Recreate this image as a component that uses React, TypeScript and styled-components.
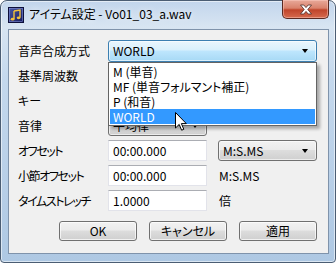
import React from 'react';
import styled, { createGlobalStyle } from 'styled-components';

const GlobalStyle = createGlobalStyle`
  html, body {
    margin: 0;
    padding: 0;
    background: #ffffff;
  }
  body {
    font-family: 'Noto Sans CJK JP', 'Noto Sans', sans-serif;
    font-size: 12px;
    font-feature-settings: 'palt';
    color: #000;
  }
`;

const Window = styled.div`
  position: relative;
  box-sizing: border-box;
  width: 336px;
  height: 263px;
  display: flex;
  flex-direction: column;
  padding: 0 6px 8px 7px;
  border: 1px solid #4b5d73;
  border-radius: 7px 7px 4px 4px;
  background: linear-gradient(to bottom, #c2d5ec 0%, #d8e5f2 10%, #c4d8ed 30%, #aec8e3 100%);
  box-shadow: inset 0 0 0 1px rgba(255, 255, 255, 0.55);
`;

const TitleBar = styled.div`
  height: 28px;
  display: flex;
  align-items: flex-start;
  flex-shrink: 0;
`;

const TitleIcon = styled.svg`
  margin-top: 6px;
  width: 16px;
  height: 16px;
  flex-shrink: 0;
`;

const TitleText = styled.span`
  margin-left: 5px;
  margin-top: 5px;
  font-size: 12px;
  line-height: 16px;
  color: #000;
  text-shadow: 0 0 6px rgba(255, 255, 255, 0.9);
`;

const CloseButton = styled.div`
  margin-left: auto;
  margin-top: -1px;
  width: 47px;
  height: 19px;
  box-sizing: border-box;
  display: flex;
  align-items: center;
  justify-content: center;
  border: 1px solid #5a2a22;
  border-top: none;
  border-radius: 0 0 5px 5px;
  background: linear-gradient(to bottom, #e8a99a 0%, #d9826c 45%, #c0452b 55%, #d66a4e 100%);
  box-shadow: inset 0 0 0 1px rgba(255, 210, 200, 0.45);
`;

const Client = styled.div`
  flex: 1;
  box-sizing: border-box;
  border: 1px solid #7f93ab;
  background: #f0f0f0;
  padding: 10px 11px 0 9px;
  display: flex;
  flex-direction: column;
`;

const Form = styled.div`
  display: grid;
  grid-template-columns: 79px 99px 99px;
  grid-auto-rows: 21px;
  column-gap: 11px;
  row-gap: 4px;
`;

const Label = styled.div<{ $tight?: boolean }>`
  align-self: center;
  font-size: 12px;
  line-height: 14px;
  white-space: nowrap;
  letter-spacing: ${(p) => (p.$tight ? '-1.4px' : '0')};
`;

const Unit = styled.div`
  align-self: center;
  font-size: 12px;
  line-height: 14px;
  padding-left: 1px;
`;

const ComboBox = styled.div<{ $open?: boolean; $wide?: boolean }>`
  position: relative;
  grid-column: ${(p) => (p.$wide ? 'span 2' : 'auto')};
  box-sizing: border-box;
  height: ${(p) => (p.$open ? '22px' : '21px')};
  display: flex;
  align-items: center;
  padding: 0 8px 0 4px;
  border: 1px solid ${(p) => (p.$open ? '#3c7fb1' : '#707070')};
  border-radius: 3px;
  background: ${(p) =>
    p.$open
      ? 'linear-gradient(to bottom, #eaf6fd 0%, #d9f0fc 45%, #bee6fd 50%, #a7d9f5 100%)'
      : 'linear-gradient(to bottom, #f2f2f2 0%, #ebebeb 45%, #dddddd 50%, #cfcfcf 100%)'};
  box-shadow: inset 0 0 0 1px rgba(255, 255, 255, 0.6);
`;

const ComboText = styled.span`
  flex: 1;
  font-size: 12px;
  line-height: 14px;
  white-space: nowrap;
`;

const Arrow = styled.span`
  width: 0;
  height: 0;
  border-left: 3.5px solid transparent;
  border-right: 3.5px solid transparent;
  border-top: 4px solid #000;
`;

const TextBox = styled.div`
  box-sizing: border-box;
  height: 21px;
  display: flex;
  align-items: center;
  padding: 0 4px;
  background: #fff;
  border: 1px solid #e2e3ea;
  border-top-color: #abadb3;
  font-size: 12px;
  line-height: 14px;
`;

const DropList = styled.div`
  position: absolute;
  z-index: 2;
  left: -1px;
  right: -1px;
  top: 21px;
  box-sizing: border-box;
  padding: 1px 1px 0;
  height: 64px;
  background: #fff;
  border: 1px solid #646464;
  box-shadow: 3px 3px 3px rgba(0, 0, 0, 0.3);
`;

const DropItem = styled.div<{ $selected?: boolean }>`
  height: 15px;
  display: flex;
  align-items: center;
  padding-left: 3px;
  font-size: 12px;
  line-height: 14px;
  white-space: pre;
  color: ${(p) => (p.$selected ? '#fff' : '#000')};
  background: ${(p) => (p.$selected ? '#3399ff' : 'transparent')};
`;

const ButtonRow = styled.div`
  display: flex;
  justify-content: flex-end;
  gap: 12px;
  margin-top: 10px;
`;

const Button = styled.div`
  box-sizing: border-box;
  width: 78px;
  height: 20px;
  display: flex;
  align-items: center;
  justify-content: center;
  border: 1px solid #707070;
  border-radius: 3px;
  background: linear-gradient(to bottom, #f2f2f2 0%, #ebebeb 45%, #dddddd 50%, #cfcfcf 100%);
  box-shadow: inset 0 0 0 1px rgba(255, 255, 255, 0.7);
  font-size: 12px;
  line-height: 14px;
`;

const Cursor = styled.svg`
  position: absolute;
  z-index: 5;
  left: 174px;
  top: 111px;
  width: 12px;
  height: 20px;
`;

const items = ['M (単音)', 'MF (単音フォルマント補正)', 'P (和音)', 'WORLD'];

const App = () => {
  return (
    <>
      <GlobalStyle />
      <Window>
        <TitleBar>
          <TitleIcon viewBox="0 0 16 16">
            <defs>
              <linearGradient id="ico" x1="0" y1="0" x2="1" y2="1">
                <stop offset="0" stopColor="#4a5aa8" />
                <stop offset="1" stopColor="#14185a" />
              </linearGradient>
            </defs>
            <rect x="0.5" y="0.5" width="15" height="15" fill="url(#ico)" stroke="#0c0f3a" />
            <rect x="1.5" y="1.5" width="13" height="13" fill="none" stroke="#7d8ad0" strokeWidth="0.6" />
            <path d="M6 4 L12 3 L12 10.5" fill="none" stroke="#f2c23a" strokeWidth="1.4" />
            <path d="M6 4 L6 12" fill="none" stroke="#f2c23a" strokeWidth="1.4" />
            <ellipse cx="4.6" cy="12.2" rx="1.9" ry="1.4" fill="#f2c23a" />
            <ellipse cx="10.6" cy="10.8" rx="1.9" ry="1.4" fill="#f2c23a" />
          </TitleIcon>
          <TitleText>アイテム設定 - Vo01_03_a.wav</TitleText>
          <CloseButton>
            <svg width="14" height="11" viewBox="0 0 14 11">
              <path
                d="M1.5 1 L4.8 1 L7 3.6 L9.2 1 L12.5 1 L8.8 5.5 L12.5 10 L9.2 10 L7 7.4 L4.8 10 L1.5 10 L5.2 5.5 Z"
                fill="#ffffff"
                stroke="#4a2a24"
                strokeWidth="0.8"
              />
            </svg>
          </CloseButton>
        </TitleBar>

        <Client>
          <Form>
            <Label>音声合成方式</Label>
            <ComboBox $open $wide>
              <ComboText>WORLD</ComboText>
              <Arrow />
              <DropList>
                {items.map((item) => (
                  <DropItem key={item} $selected={item === 'WORLD'}>
                    {item}
                  </DropItem>
                ))}
              </DropList>
            </ComboBox>

            <Label>基準周波数</Label>
            <TextBox />
            <div />

            <Label>キー</Label>
            <ComboBox>
              <ComboText />
              <Arrow />
            </ComboBox>
            <div />

            <Label>音律</Label>
            <ComboBox>
              <ComboText>平均律</ComboText>
              <Arrow />
            </ComboBox>
            <div />

            <Label $tight>オフセット</Label>
            <TextBox>00:00.000</TextBox>
            <ComboBox>
              <ComboText>M:S.MS</ComboText>
              <Arrow />
            </ComboBox>

            <Label $tight>小節オフセット</Label>
            <TextBox>00:00.000</TextBox>
            <Unit>M:S.MS</Unit>

            <Label $tight>タイムストレッチ</Label>
            <TextBox>1.0000</TextBox>
            <Unit>倍</Unit>
          </Form>

          <ButtonRow>
            <Button>OK</Button>
            <Button>キャンセル</Button>
            <Button>適用</Button>
          </ButtonRow>
        </Client>

        <Cursor viewBox="0 0 12 20">
          <path
            d="M0.5 0.5 L0.5 16 L4.2 12.4 L6.6 18.2 L8.8 17.3 L6.4 11.6 L11.3 11.6 Z"
            fill="#ffffff"
            stroke="#000000"
            strokeWidth="1"
            strokeLinejoin="miter"
          />
        </Cursor>
      </Window>
    </>
  );
};

export default App;
